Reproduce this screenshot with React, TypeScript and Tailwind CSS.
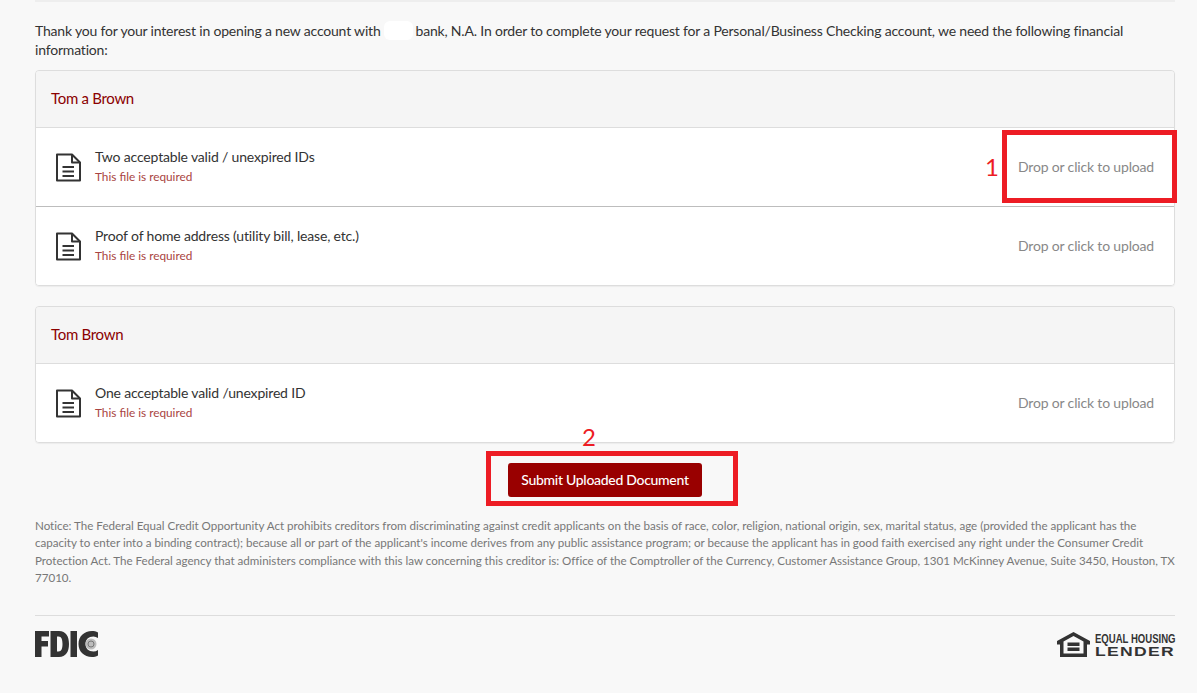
const FileIcon = () => (
  <svg width="25" height="29" viewBox="0 0 25 29" fill="none" stroke="#333333" strokeWidth="2" className="shrink-0">
    <path d="M1 1.5H16L24 9.5V27.5H1Z" strokeLinejoin="round" />
    <path d="M16 1.5V9.5H24" strokeLinejoin="round" />
    <path d="M6.5 14H18M6.5 18.5H18M6.5 23H18" />
  </svg>
);

const UploadRow = ({ label, last }: { label: string; last?: boolean }) => (
  <div className={`flex items-center justify-between bg-white pl-[20px] pr-[20px] ${last ? "h-[78px]" : "h-[79px] border-b border-[#bdbdbd]"}`}>
    <div className="flex items-center gap-[14px]">
      <FileIcon />
      <div className="flex flex-col pb-[2px]">
        <span className="text-[14px] leading-[20px] tracking-[-0.17px] text-[#333333]">{label}</span>
        <span className="mt-[2px] text-[11.8px] leading-[16px] text-[#a94442]">This file is required</span>
      </div>
    </div>
    <span className="pb-[2px] text-[14px] tracking-[-0.17px] text-[#888888]">Drop or click to upload</span>
  </div>
);

const DocCard = ({ name, items }: { name: string; items: string[] }) => (
  <section className="overflow-hidden rounded-[4px] border border-[#dddddd] shadow-[0_1px_1px_rgba(0,0,0,0.05)]">
    <header className="flex h-[57px] items-center border-b border-[#dddddd] bg-[#f5f5f5] pb-[2px] pl-[15px] pr-[15px] text-[15px] tracking-[-0.3px] text-[#8b0000]">
      {name}
    </header>
    {items.map((item, i) => (
      <UploadRow key={item} label={item} last={i === items.length - 1} />
    ))}
  </section>
);

const FdicLogo = () => (
  <svg width="64" height="26" viewBox="0 0 64 26">
    <g fill="#333333">
      <path d="M0 0H14V5.5H6.5V10H13V15.5H6.5V26H0Z" />
      <path fillRule="evenodd" d="M15.5 0H24C31 0 34 5.5 34 13C34 20.5 31 26 24 26H15.5ZM22 5.5V20.5H23.5C26.5 20.5 27.5 17.5 27.5 13C27.5 8.5 26.5 5.5 23.5 5.5Z" />
      <path d="M35.5 0H42V26H35.5Z" />
      <path d="M63 1.5V7C61.5 6 60 5.5 58.5 5.5C53.5 5.5 50.5 8.5 50.5 13C50.5 17.5 53.5 20.5 58.5 20.5C60 20.5 61.5 20 63 19V24.5C61 25.6 59 26 57 26C49 26 43.5 20.5 43.5 13C43.5 5.5 49 0 57 0C59 0 61 0.4 63 1.5Z" />
    </g>
    <circle cx="56" cy="13" r="5.5" fill="#bdbdbd" />
    <circle cx="56" cy="13" r="3" fill="none" stroke="#777777" strokeWidth="1" />
  </svg>
);

const HousingIcon = () => (
  <svg width="33" height="25" viewBox="0 0 33 25" className="shrink-0">
    <path fill="#333333" fillRule="evenodd" d="M16.5 0L33 9V12.5H30V25H3V12.5H0V9ZM16.5 4L6.5 9.5V21.5H26.5V9.5Z" />
    <path fill="#333333" d="M10.5 10.5H22.5V14H10.5ZM10.5 15.5H22.5V19H10.5Z" />
  </svg>
);

const App = () => {
  return (
    <main className="relative min-h-[693px] bg-[#f8f8f8] pl-[35px] pr-[22px] font-['Lato','Liberation_Sans',sans-serif]">
      <div className="border-t-2 border-[#eeeeee] pt-[19px]">
        <p className="text-[14px] leading-[19px] tracking-[-0.19px] text-[#333333]">
          Thank you for your interest in opening a new account with
          <span className="mx-[3px] inline-block h-[19px] w-[29px] rounded-[6px] bg-white align-top" />
          bank, N.A. In order to complete your request for a Personal/Business Checking account, we need the following financial information:
        </p>

        <div className="mt-[11px] flex flex-col gap-[20px]">
          <DocCard
            name="Tom a Brown"
            items={["Two acceptable valid / unexpired IDs", "Proof of home address (utility bill, lease, etc.)"]}
          />
          <DocCard name="Tom Brown" items={["One acceptable valid /unexpired ID"]} />
        </div>

        <div className="mt-[20px] flex justify-center">
          <button className="h-[34px] w-[194px] rounded-[3px] bg-[#990000] pb-[2px] text-[14px] font-medium tracking-[-0.3px] text-white">
            Submit Uploaded Document
          </button>
        </div>

        <p className="mt-[20px] text-[11.6px] leading-[17.3px] tracking-[-0.01px] text-[#777777]">
          Notice: The Federal Equal Credit Opportunity Act prohibits creditors from discriminating against credit applicants on the basis of race, color, religion, national origin, sex, marital status, age (provided the applicant has the capacity to enter into a binding contract); because all or part of the applicant's income derives from any public assistance program; or because the applicant has in good faith exercised any right under the Consumer Credit Protection Act. The Federal agency that administers compliance with this law concerning this creditor is: Office of the Comptroller of the Currency, Customer Assistance Group, 1301 McKinney Avenue, Suite 3450, Houston, TX 77010.
        </p>

        <footer className="mt-[29px] flex items-center justify-between border-t border-[#dddddd] pt-[15px]">
          <FdicLogo />
          <div className="flex items-center gap-[5px]">
            <HousingIcon />
            <div className="flex w-[80px] flex-col whitespace-nowrap font-['Liberation_Sans',sans-serif] font-bold text-[#333333]">
              <span className="origin-left scale-x-[0.735] text-[13px] leading-[14px]">EQUAL HOUSING</span>
              <span className="origin-left scale-x-[1.3] text-[13.5px] leading-[11px] tracking-[1px]">LENDER</span>
            </div>
          </div>
        </footer>
      </div>

      <div className="absolute left-[1002px] top-[130px] h-[73px] w-[175px] border-[5px] border-[#ed1c24]" />
      <span className="absolute left-[985px] top-[153px] text-[24px] leading-[28px] text-[#ed1c24]">1</span>
      <div className="absolute left-[486px] top-[451px] h-[55px] w-[252px] border-[5px] border-[#ed1c24]" />
      <span className="absolute left-[582px] top-[423px] text-[24px] leading-[28px] text-[#ed1c24]">2</span>
    </main>
  );
};

export default App;
